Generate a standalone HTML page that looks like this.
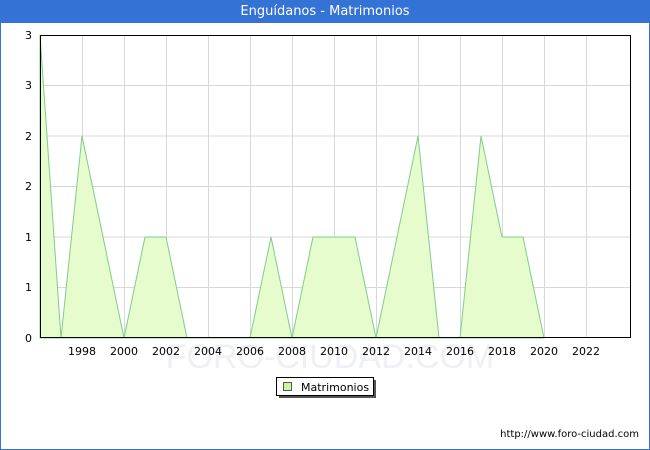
<!DOCTYPE html>
<html><head><meta charset="utf-8"><style>
body{margin:0;width:650px;height:450px;overflow:hidden;font-family:"DejaVu Sans","Liberation Sans",sans-serif;}
.frame{position:absolute;left:0;top:0;width:648px;height:448px;border:1px solid #3572d6;background:#fff}
.hdr{position:absolute;left:0;top:0;width:650px;height:23px;background:#3572d6;color:#fff;font-size:13px;text-align:center;line-height:23px}
</style></head><body>
<div class="frame"></div>
<div class="hdr">Enguídanos - Matrimonios</div>
<svg width="650" height="450" style="position:absolute;left:0;top:0">
<g stroke="#d8d8d8" stroke-width="1">
<line x1="40" x2="630" y1="85.5" y2="85.5"/><line x1="40" x2="630" y1="136" y2="136"/><line x1="40" x2="630" y1="186.5" y2="186.5"/><line x1="40" x2="630" y1="237" y2="237"/><line x1="40" x2="630" y1="287.5" y2="287.5"/>
<line x1="82.5" x2="82.5" y1="35" y2="338"/><line x1="124.5" x2="124.5" y1="35" y2="338"/><line x1="166.5" x2="166.5" y1="35" y2="338"/><line x1="208.5" x2="208.5" y1="35" y2="338"/><line x1="250.5" x2="250.5" y1="35" y2="338"/><line x1="292.5" x2="292.5" y1="35" y2="338"/><line x1="334.5" x2="334.5" y1="35" y2="338"/><line x1="376.5" x2="376.5" y1="35" y2="338"/><line x1="418.5" x2="418.5" y1="35" y2="338"/><line x1="460.5" x2="460.5" y1="35" y2="338"/><line x1="502.5" x2="502.5" y1="35" y2="338"/><line x1="544.5" x2="544.5" y1="35" y2="338"/><line x1="586.5" x2="586.5" y1="35" y2="338"/>
</g>
<text x="330" y="368" font-size="34" fill="#eef0f6" text-anchor="middle" font-family="Liberation Sans">FORO-CIUDAD.COM</text>
<polygon fill="#e6fccc" stroke="#7fcc8a" stroke-width="1" points="40,338 40,35 61,338 82,136 103,237 124,338 145,237 166,237 187,338 250,338 271,237 292,338 313,237 334,237 355,237 376,338 397,237 418,136 439,338 460,338 481,136 502,237 523,237 544,338"/>
<rect x="40.5" y="35.5" width="590" height="302" fill="none" stroke="#000" stroke-width="1"/>
<g font-size="11" fill="#000" text-anchor="end">
<text x="32" y="39">3</text><text x="32" y="89">3</text><text x="32" y="140">2</text><text x="32" y="190">2</text><text x="32" y="241">1</text><text x="32" y="291">1</text><text x="32" y="342">0</text>
</g>
<g font-size="11" fill="#000" text-anchor="middle">
<text x="82" y="355">1998</text><text x="124" y="355">2000</text><text x="166" y="355">2002</text><text x="208" y="355">2004</text><text x="250" y="355">2006</text><text x="292" y="355">2008</text><text x="334" y="355">2010</text><text x="376" y="355">2012</text><text x="418" y="355">2014</text><text x="460" y="355">2016</text><text x="502" y="355">2018</text><text x="544" y="355">2020</text><text x="586" y="355">2022</text>
</g>
<rect x="279" y="380" width="97" height="18" fill="#555"/>
<rect x="276.5" y="377.5" width="97" height="18" fill="#fff" stroke="#000"/>
<rect x="283.5" y="382.5" width="8" height="8" fill="#ccf5a0" stroke="#555"/>
<text x="301" y="391" font-size="11">Matrimonios</text>
<text x="639" y="437" font-size="10" text-anchor="end">http://www.foro-ciudad.com</text>
</svg>
</body></html>
